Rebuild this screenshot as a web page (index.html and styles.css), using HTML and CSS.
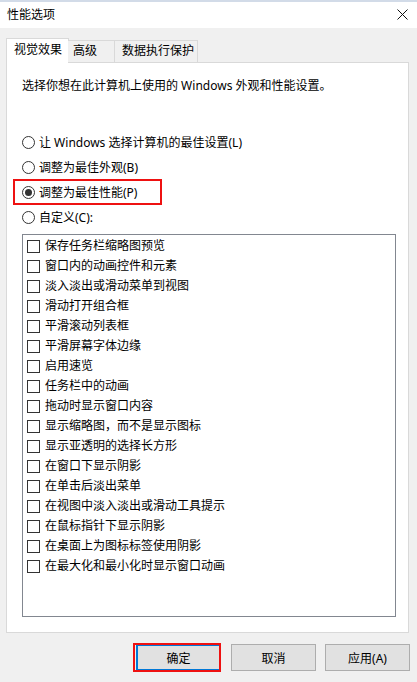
FILE: index.html
```html
<!DOCTYPE html>
<html lang="zh-CN">
<head>
    <meta charset="UTF-8">
    <meta name="viewport" content="width=device-width, initial-scale=1.0">
    <title>性能选项</title>
    <link rel="stylesheet" href="styles.css">
</head>
<body>
    <div class="topline"></div>
    <div class="titlebar">
        <span class="title">性能选项</span>
        <svg class="close" width="11" height="11" viewBox="0 0 11 11">
            <path d="M0.5 0.5 L10.5 10.5 M10.5 0.5 L0.5 10.5" stroke="#111" stroke-width="1" fill="none"/>
        </svg>
    </div>

    <div class="dialog">
        <div class="tabs">
            <div class="tab active tab-1">视觉效果</div>
            <div class="tab tab-2">高级</div>
            <div class="tab tab-3">数据执行保护</div>
        </div>

        <div class="panel">
            <p class="intro">选择你想在此计算机上使用的 Windows 外观和性能设置。</p>

            <div class="radios">
                <div class="radio-row"><span class="radio"></span>让 Windows 选择计算机的最佳设置(L)</div>
                <div class="radio-row"><span class="radio"></span>调整为最佳外观(B)</div>
                <div class="radio-row marked"><span class="radio checked"></span>调整为最佳性能(P)</div>
                <div class="radio-row"><span class="radio"></span>自定义(C):</div>
            </div>

            <div class="list">
                <div class="item"><span class="check"></span>保存任务栏缩略图预览</div>
                <div class="item"><span class="check"></span>窗口内的动画控件和元素</div>
                <div class="item"><span class="check"></span>淡入淡出或滑动菜单到视图</div>
                <div class="item"><span class="check"></span>滑动打开组合框</div>
                <div class="item"><span class="check"></span>平滑滚动列表框</div>
                <div class="item"><span class="check"></span>平滑屏幕字体边缘</div>
                <div class="item"><span class="check"></span>启用速览</div>
                <div class="item"><span class="check"></span>任务栏中的动画</div>
                <div class="item"><span class="check"></span>拖动时显示窗口内容</div>
                <div class="item"><span class="check"></span>显示缩略图，而不是显示图标</div>
                <div class="item"><span class="check"></span>显示亚透明的选择长方形</div>
                <div class="item"><span class="check"></span>在窗口下显示阴影</div>
                <div class="item"><span class="check"></span>在单击后淡出菜单</div>
                <div class="item"><span class="check"></span>在视图中淡入淡出或滑动工具提示</div>
                <div class="item"><span class="check"></span>在鼠标指针下显示阴影</div>
                <div class="item"><span class="check"></span>在桌面上为图标标签使用阴影</div>
                <div class="item"><span class="check"></span>在最大化和最小化时显示窗口动画</div>
            </div>
        </div>

        <div class="buttons">
            <button class="btn default">确定</button>
            <button class="btn">取消</button>
            <button class="btn">应用(A)</button>
        </div>
    </div>
</body>
</html>
```

FILE: styles.css
```css
body, html {
    margin: 0;
    padding: 0;
}
body {
    width: 417px;
    height: 682px;
    overflow: hidden;
    background-color: #f0f0f0;
    font-family: "Noto Sans", "Noto Sans CJK SC", sans-serif;
    font-size: 12px;
    color: #000;
}
/* Barra de titulo */
.topline {
    height: 2px;
    background-color: #d2dbe8;
}
.titlebar {
    height: 26px;
    background-color: #fff;
    display: flex;
    align-items: center;
    justify-content: space-between;
    padding: 0 9px 0 7px;
}
.title {
    line-height: 16px;
}
.close {
    display: block;
    margin-top: -2px;
}
/* Dialogo */
.dialog {
    padding: 10px 8px 0 6px;
}
.tabs {
    display: flex;
    align-items: flex-end;
    height: 24px;
    position: relative;
    z-index: 1;
}
.tab {
    box-sizing: border-box;
    height: 22px;
    line-height: 20px;
    border: 1px solid #d9d9d9;
    border-bottom: none;
    background-color: #f0f0f0;
    padding-left: 5px;
}
.tab.active {
    height: 25px;
    line-height: 22px;
    background-color: #fff;
    margin-bottom: -1px;
    padding-left: 7px;
}
.tab-1 { width: 63px; }
.tab-2 { width: 47px; margin-left: -1px; border-left: none; }
.tab-3 { width: 84px; margin-left: -1px; padding-left: 7px; }

.panel {
    box-sizing: border-box;
    height: 571px;
    background-color: #fff;
    border: 1px solid #d9d9d9;
    padding: 15px 12px 0 15px;
}
.intro {
    margin: 0;
    line-height: 16px;
}
.radios {
    margin-top: 36px;
}
.radio-row {
    height: 25px;
    line-height: 16px;
    display: flex;
    align-items: center;
    position: relative;
}
.radio {
    box-sizing: border-box;
    width: 13px;
    height: 13px;
    border: 1px solid #333;
    border-radius: 50%;
    margin-right: 4px;
    display: flex;
    align-items: center;
    justify-content: center;
}
.radio.checked:after {
    content: '';
    width: 7px;
    height: 7px;
    border-radius: 50%;
    background-color: #333;
}
/* recuadro rojo de la captura */
.radio-row.marked:after {
    content: '';
    position: absolute;
    left: -9px;
    top: -1px;
    width: 149px;
    height: 26px;
    box-sizing: border-box;
    border: 2px solid #ee1111;
}
.list {
    box-sizing: border-box;
    margin-top: 4px;
    height: 383px;
    border: 1px solid #828790;
    padding: 1px 0 0 4px;
}
.item {
    height: 20px;
    line-height: 16px;
    display: flex;
    align-items: center;
}
.check {
    box-sizing: border-box;
    width: 13px;
    height: 13px;
    border: 1px solid #333;
    margin-right: 5px;
}
/* Botones */
.buttons {
    display: flex;
    justify-content: flex-end;
    gap: 9px;
    margin-top: 11px;
    margin-right: -1px;
}
.btn {
    box-sizing: border-box;
    width: 85px;
    height: 27px;
    border: 1px solid #adadad;
    background-color: #e1e1e1;
    font-family: inherit;
    font-size: 12px;
    color: #000;
    padding: 0;
}
.btn.default {
    border: 2px solid #0078d7;
    position: relative;
    margin-right: 1px;
}
.btn.default:after {
    content: '';
    position: absolute;
    left: -5px;
    top: -3px;
    right: -2px;
    bottom: -3px;
    border: 2px solid #ee1111;
}
```
